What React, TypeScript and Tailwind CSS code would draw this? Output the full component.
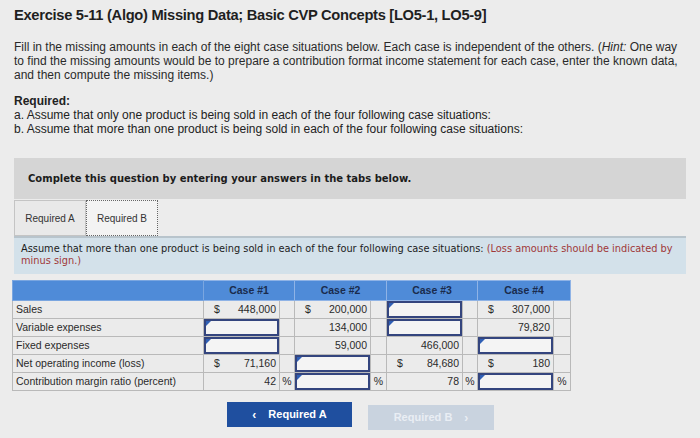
import React from 'react';

type Cell =
  | { kind: 'value'; dollar?: boolean; value: string; pct?: boolean }
  | { kind: 'input'; pct?: boolean }
  | { kind: 'empty'; pct?: boolean };

const ROWS: { label: string; cases: Cell[] }[] = [
  {
    label: 'Sales',
    cases: [
      { kind: 'value', dollar: true, value: '448,000' },
      { kind: 'value', dollar: true, value: '200,000' },
      { kind: 'input' },
      { kind: 'value', dollar: true, value: '307,000' }
    ]
  },
  {
    label: 'Variable expenses',
    cases: [
      { kind: 'input' },
      { kind: 'value', value: '134,000' },
      { kind: 'input' },
      { kind: 'value', value: '79,820' }
    ]
  },
  {
    label: 'Fixed expenses',
    cases: [
      { kind: 'input' },
      { kind: 'value', value: '59,000' },
      { kind: 'value', value: '466,000' },
      { kind: 'input' }
    ]
  },
  {
    label: 'Net operating income (loss)',
    cases: [
      { kind: 'value', dollar: true, value: '71,160' },
      { kind: 'input' },
      { kind: 'value', dollar: true, value: '84,680' },
      { kind: 'value', dollar: true, value: '180' }
    ]
  },
  {
    label: 'Contribution margin ratio (percent)',
    cases: [
      { kind: 'value', value: '42', pct: true },
      { kind: 'input', pct: true },
      { kind: 'value', value: '78', pct: true },
      { kind: 'input', pct: true }
    ]
  }
];

const MAIN_W = ['w-[76px]', 'w-[76px]', 'w-[76px]', 'w-[76px]'];
const PCT_W = ['w-[15px]', 'w-[16px]', 'w-[15px]', 'w-[17px]'];

const InputBox = () => (
  <div className="relative h-full w-full border-2 border-[#34457e] bg-[#f4f4f4]">
    <div className="absolute left-0 top-0 h-0 w-0 border-l-[5px] border-b-[5px] border-l-[#2f5fb5] border-b-transparent" />
  </div>
);

const CaseCells: React.FC<{ cell: Cell; i: number }> = ({ cell, i }) => (
  <>
    <td className={`${MAIN_W[i]} h-[18px] border border-[#b9b9b9] p-0`}>
      {cell.kind === 'input' ? (
        <InputBox />
      ) : cell.kind === 'value' ? (
        <div className="flex h-full items-center justify-between pl-[10px] pr-[3px]">
          <span>{cell.dollar ? '$' : ''}</span>
          <span>{cell.value}</span>
        </div>
      ) : null}
    </td>
    <td className={`${PCT_W[i]} border border-[#b9b9b9] p-0 text-center`}>{cell.pct ? '%' : ''}</td>
  </>
);

export default function App() {
  return (
    <div className="h-[438px] w-[700px] overflow-hidden bg-[#ececec] text-[#222]">
      <div className="px-[14px] pt-[6px]">
        <h1 className="font-['Liberation_Sans',sans-serif] text-[14.7px] font-bold leading-[18px] tracking-[-0.3px] text-[#1f1f1f]">
          Exercise 5-11 (Algo) Missing Data; Basic CVP Concepts [LO5-1, LO5-9]
        </h1>
        <p className="mt-[16px] font-['Liberation_Sans',sans-serif] text-[12px] leading-[14px] text-[#2a2a2a]">
          Fill in the missing amounts in each of the eight case situations below. Each case is independent of the others. (
          <i>Hint:</i> One way to find the missing amounts would be to prepare a contribution format income statement for each
          case, enter the known data, and then compute the missing items.)
        </p>
        <p className="mt-[12px] font-['Liberation_Sans',sans-serif] text-[12px] font-bold leading-[14px]">Required:</p>
        <p className="font-['Liberation_Sans',sans-serif] text-[12px] leading-[14px]">
          a. Assume that only one product is being sold in each of the four following case situations:
        </p>
        <p className="font-['Liberation_Sans',sans-serif] text-[12px] leading-[14px]">
          b. Assume that more than one product is being sold in each of the four following case situations:
        </p>
      </div>

      <div className="mx-[14px] mt-[22px] flex h-[41px] items-center bg-[#d5d5d5] px-[14px] font-['DejaVu_Sans',sans-serif] text-[10px] font-bold text-[#1c1c1c]">
        Complete this question by entering your answers in the tabs below.
      </div>

      <div className="mx-[14px] mt-[1px] flex h-[36px] font-['Liberation_Sans',sans-serif] text-[10px] text-[#333]">
        <div className="flex w-[72px] items-center justify-center border border-[#c4c4c4] bg-[#e9e9e9]">Required A</div>
        <div className="flex w-[72px] items-center justify-center border border-dotted border-[#666] bg-[#f3f3f3]">
          Required B
        </div>
      </div>

      <div className="mx-[14px] h-[38px] border-t-2 border-[#b8c4cc] bg-[#d3e1ea] pl-[7px] pr-[2px] pt-[5px] font-['DejaVu_Sans',sans-serif] text-[9.8px] leading-[12px] text-[#1c1c1c]">
        Assume that more than one product is being sold in each of the four following case situations:{' '}
        <span className="text-[#a03838]">(Loss amounts should be indicated by minus sign.)</span>
      </div>

      <div className="ml-[12px] mt-[6px]">
        <table className="border-collapse font-['Liberation_Sans',sans-serif] text-[10.5px] text-[#2a2a2a]">
          <thead>
            <tr className="h-[20px] bg-[#4f8bd8]">
              <th className="w-[191px] border border-[#7aa6e0]" />
              {['Case #1', 'Case #2', 'Case #3', 'Case #4'].map((c) => (
                <th key={c} colSpan={2} className="border border-[#8fb3e6] text-center font-bold text-[#1a2b4d]">
                  {c}
                </th>
              ))}
            </tr>
          </thead>
          <tbody className="bg-[#ebebeb]">
            {ROWS.map((row) => (
              <tr key={row.label}>
                <td className="h-[18px] border border-[#b9b9b9] px-[3px]">{row.label}</td>
                {row.cases.map((cell, i) => (
                  <CaseCells key={i} cell={cell} i={i} />
                ))}
              </tr>
            ))}
          </tbody>
        </table>
      </div>

      <div className="mt-[11px] flex font-['Liberation_Sans',sans-serif] text-[11px] font-bold">
        <button className="ml-[227px] flex h-[25px] w-[125px] items-center justify-center gap-[12px] bg-[#1f4f9f] text-white">
          <span className="text-[12px]">‹</span>
          <span>Required A</span>
        </button>
        <button className="ml-[16px] mt-[3px] flex h-[25px] w-[126px] items-center justify-center gap-[12px] bg-[#c9d3df] text-[#e9eef4]">
          <span>Required B</span>
          <span className="text-[12px]">›</span>
        </button>
      </div>
    </div>
  );
}
